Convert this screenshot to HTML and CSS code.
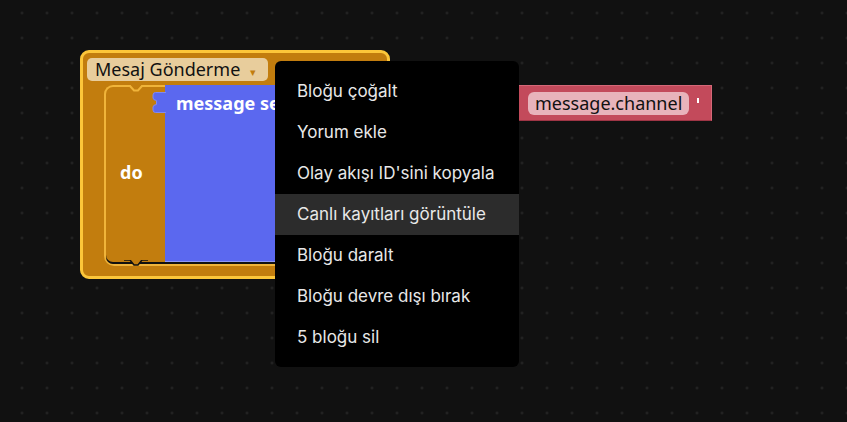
FILE: index.html
```html
<!DOCTYPE html>
<html lang="tr">
<head>
<meta charset="utf-8">
<link rel="stylesheet" href="styles.css">
</head>
<body>
<div class="workspace">
  <div class="value-block">
    <span class="value-field">message.channel</span>
    <span class="value-tick"></span>
  </div>

  <div class="event-block">
    <div class="hat-row">
      <div class="dropdown">
        <span class="dropdown-text">Mesaj Gönderme</span>
        <span class="dropdown-arrow">▾</span>
      </div>
    </div>
    <div class="statement">
      <svg class="notch-top" width="24" height="7" viewBox="0 0 24 7"><path d="M0 0 L6 0 L10 5 L14 5 L18 0 L24 0 L24 -1 L0 -1 Z" fill="#c27d0e"/><path d="M0 1 L6 1 L10 5.5 L14 5.5 L18 1 L24 1" fill="none" stroke="#f0b43a" stroke-width="2"/></svg>
      <div class="do-column">
        <span class="do-label">do</span>
        <svg class="notch-bottom" width="24" height="7" viewBox="0 0 24 7"><path d="M0 0 L6 0 L10 5 L14 5 L18 0 L24 0" fill="#c27d0e" stroke="#111" stroke-width="1.5"/></svg>
      </div>
      <div class="action-block">
        <svg class="tab" width="14" height="21" viewBox="0 0 14 21"><path d="M14 0.5 L3.5 0.5 Q1 0.5 1 3 L1 6 Q1 8 4.5 8.5 L4.5 12.5 Q1 13 1 15 L1 18 Q1 20.5 3.5 20.5 L14 20.5" fill="#5b68ef" stroke="#8089f3" stroke-width="1"/></svg>
        <span class="action-text">message send</span>
      </div>
    </div>
  </div>

  <div class="context-menu">
    <div class="menu-item">Bloğu çoğalt</div>
    <div class="menu-item">Yorum ekle</div>
    <div class="menu-item">Olay akışı ID'sini kopyala</div>
    <div class="menu-item active">Canlı kayıtları görüntüle</div>
    <div class="menu-item">Bloğu daralt</div>
    <div class="menu-item">Bloğu devre dışı bırak</div>
    <div class="menu-item">5 bloğu sil</div>
  </div>
</div>
</body>
</html>
```
FILE: styles.css
```css
* { box-sizing: border-box; }
html, body {
  margin: 0;
  padding: 0;
  width: 847px;
  height: 422px;
  overflow: hidden;
  background: #111111;
}
.workspace {
  position: relative;
  width: 847px;
  height: 422px;
  background-color: #111111;
  background-image: radial-gradient(circle, #262626 1px, transparent 1.5px);
  background-size: 25px 25px;
  background-position: 9.5px 0.5px;
  font-family: Inter, "Noto Sans", sans-serif;
}

/* Event block */
.event-block {
  position: absolute;
  left: 80px;
  top: 50px;
  width: 310px;
  height: 229px;
  background: #c27d0e;
  border: 3px solid #fcc63a;
  border-radius: 9px;
  padding: 5px 4px 0 4px;
  display: flex;
  flex-direction: column;
}
.hat-row {
  display: flex;
  height: 23px;
  margin-bottom: 4px;
}
.dropdown {
  width: 181px;
  height: 23px;
  background: #e8cd9c;
  border-radius: 5px;
  display: flex;
  align-items: center;
  padding-left: 8px;
  font-family: "Noto Sans", sans-serif;
  font-size: 18px;
  color: #111;
}
.dropdown-text { line-height: 23px; }
.dropdown-arrow {
  margin-left: 10px;
  font-size: 11px;
  color: #c27d0e;
  margin-top: 3px;
}
.statement {
  position: relative;
  display: flex;
  margin-left: 17px;
  height: 181px;
  border-left: 2px solid #f0b43a;
  border-top: 2px solid #f0b43a;
  border-bottom: 2px solid #f0b43a;
  border-radius: 9px 0 0 10px;
}
.notch-top {
  position: absolute;
  top: -2px;
  left: 18px;
}
.do-column {
  position: relative;
  width: 59px;
  height: 175px;
  display: flex;
  align-items: center;
  padding-left: 14px;
  border-bottom-left-radius: 7px;
  box-shadow: 0 2px 0 #111;
}
.notch-bottom {
  position: absolute;
  bottom: -5px;
  left: 18px;
}
.do-label {
  font-family: "Noto Sans", sans-serif;
  font-weight: 700;
  font-size: 18px;
  color: #fff;
  margin-top: -5px;
}
.action-block {
  position: relative;
  flex: 1;
  margin-top: -2px;
  height: 177px;
  background: #5b68ef;
  border-bottom: 1px solid #8f98f5;
  box-shadow: 0 2px 0 #111;
  padding: 6px 0 0 11px;
}
.tab {
  position: absolute;
  left: -13px;
  top: 7px;
}
.action-text {
  font-family: "Noto Sans", sans-serif;
  font-weight: 700;
  font-size: 18px;
  color: #fff;
  white-space: nowrap;
}

/* Value block */
.value-block {
  position: absolute;
  left: 440px;
  top: 85px;
  width: 272px;
  height: 36px;
  background: #c34a5b;
  border: 1px solid #d56878;
  border-bottom-color: #9e3545;
  display: flex;
  align-items: center;
  padding-left: 87px;
}
.value-field {
  height: 23px;
  width: 161px;
  background: #e8b3bb;
  border-radius: 6px;
  padding-left: 7px;
  font-family: "Noto Sans", sans-serif;
  font-size: 18px;
  line-height: 23px;
  color: #111;
  white-space: nowrap;
}
.value-tick {
  width: 2px;
  height: 5px;
  background: #fff;
  margin-left: 8px;
  margin-top: -6px;
}

/* Context menu */
.context-menu {
  position: absolute;
  left: 275px;
  top: 61px;
  width: 244px;
  height: 306px;
  background: #000;
  border-radius: 6px;
  padding: 10px 0 9px 0;
  display: flex;
  flex-direction: column;
}
.menu-item {
  height: 41px;
  line-height: 41px;
  padding-left: 22px;
  font-size: 17px;
  color: #e8e8e8;
  white-space: nowrap;
}
.menu-item.active {
  background: #2c2c2c;
}
```
